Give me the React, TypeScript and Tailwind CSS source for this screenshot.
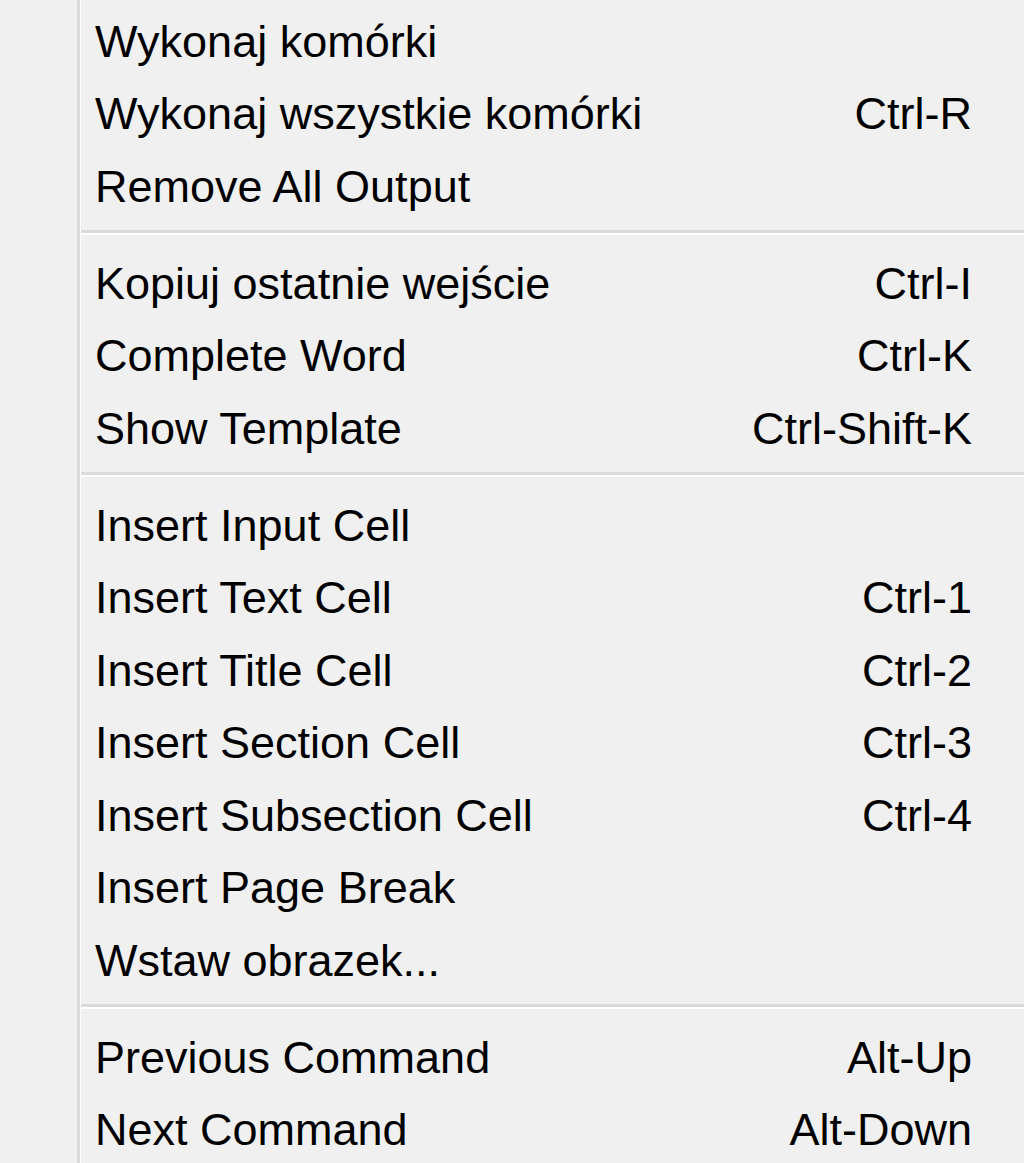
import React from 'react'

type Item = { label: string; shortcut?: string }

const groups: Item[][] = [
  [
    { label: 'Wykonaj komórki' },
    { label: 'Wykonaj wszystkie komórki', shortcut: 'Ctrl-R' },
    { label: 'Remove All Output' },
  ],
  [
    { label: 'Kopiuj ostatnie wejście', shortcut: 'Ctrl-I' },
    { label: 'Complete Word', shortcut: 'Ctrl-K' },
    { label: 'Show Template', shortcut: 'Ctrl-Shift-K' },
  ],
  [
    { label: 'Insert Input Cell' },
    { label: 'Insert Text Cell', shortcut: 'Ctrl-1' },
    { label: 'Insert Title Cell', shortcut: 'Ctrl-2' },
    { label: 'Insert Section Cell', shortcut: 'Ctrl-3' },
    { label: 'Insert Subsection Cell', shortcut: 'Ctrl-4' },
    { label: 'Insert Page Break' },
    { label: 'Wstaw obrazek...' },
  ],
  [
    { label: 'Previous Command', shortcut: 'Alt-Up' },
    { label: 'Next Command', shortcut: 'Alt-Down' },
  ],
]

function Separator() {
  return (
    <div className="flex h-[24.5px] flex-col pt-[8px]">
      <div className="h-[3px] bg-[#dadada]" />
      <div className="h-[2px] bg-white" />
    </div>
  )
}

function MenuRow({ item }: { item: Item }) {
  return (
    <div className="flex h-[72.5px] items-center justify-between pl-[14px] pr-[52px] leading-none">
      <span>{item.label}</span>
      {item.shortcut && <span>{item.shortcut}</span>}
    </div>
  )
}

export default function App() {
  return (
    <div
      className="flex h-[1163px] w-[1024px] overflow-hidden bg-[#f0f0f0] text-[45px] text-black"
      style={{ fontFamily: '"Liberation Sans", Arial, sans-serif' }}
    >
      {/* icon gutter */}
      <div className="w-[77px] shrink-0" />
      <div className="w-[3px] shrink-0 bg-[#dadada]" />
      <div className="w-[1px] shrink-0 bg-white" />

      <div className="flex-1 pt-[4.75px]">
        {groups.map((group, gi) => (
          <div key={gi}>
            {gi > 0 && <Separator />}
            {group.map((item) => (
              <MenuRow key={item.label} item={item} />
            ))}
          </div>
        ))}
      </div>
    </div>
  )
}
